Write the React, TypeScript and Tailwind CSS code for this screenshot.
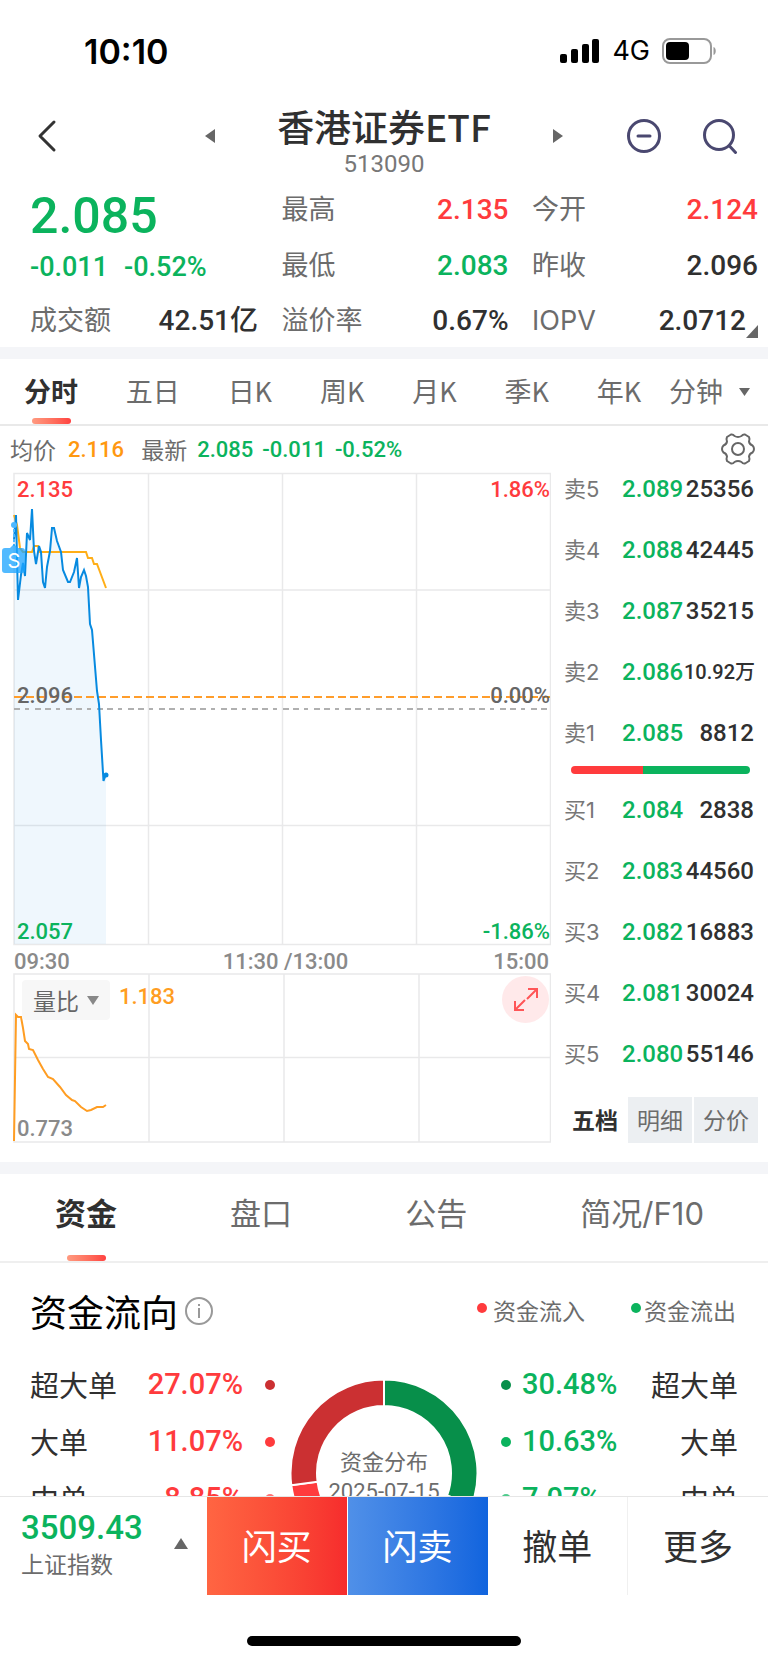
import type { ReactNode } from 'react'

const NUM = "font-['Roboto','Noto_Sans_CJK_SC',sans-serif] font-medium"
const UP = 'text-[#ff3b3d]'
const DOWN = 'text-[#0bb35d]'
const INK = 'text-[#303030]'

function Num({ className = '', children }: { className?: string; children: ReactNode }) {
  return <span className={`${NUM} whitespace-nowrap ${className}`}>{children}</span>
}

function StatusBar() {
  return (
    <div className="flex h-[102px] items-center justify-between pl-[84px] pr-[51px]">
      <span className="font-['Inter',sans-serif] text-[34px] font-semibold text-black">10:10</span>
      <div className="flex items-center gap-[12px]">
        <svg width="40" height="25" viewBox="0 0 40 25" fill="#000" aria-hidden="true">
          <rect x="0" y="15" width="7" height="9" rx="2" />
          <rect x="11" y="10" width="7" height="14" rx="2" />
          <rect x="22" y="5" width="7" height="19" rx="2" />
          <rect x="32" y="0" width="7" height="24" rx="2" />
        </svg>
        <span className="font-['Inter',sans-serif] text-[27px] text-black">4G</span>
        <svg width="55" height="26" viewBox="0 0 55 26" aria-hidden="true">
          <rect x="1" y="1" width="48" height="24" rx="7" fill="none" stroke="#999" strokeWidth="2" />
          <rect x="4" y="4" width="23" height="18" rx="4" fill="#000" />
          <path d="M51.500 9c3 1 3 7 0 8z" fill="#999" />
        </svg>
      </div>
    </div>
  )
}

function Header() {
  return (
    <header className="flex h-[80px] items-start justify-between pl-[32px] pr-[30px]">
      <button aria-label="返回" className="mt-[16px] flex h-[36px] w-[32px] items-center">
        <svg width="26" height="34" viewBox="0 0 26 34" fill="none" stroke="#333" strokeWidth="3" strokeLinecap="round" strokeLinejoin="round">
          <path d="M22 3L8 17l14 14" />
        </svg>
      </button>
      <div className="ml-[78px] flex items-start gap-[62px]">
        <button aria-label="上一只" className="mt-[27px]">
          <svg width="10" height="14" viewBox="0 0 10 14" fill="#666"><path d="M10 0v14L0 7z" /></svg>
        </button>
        <div className="flex flex-col items-center">
          <h1 className="text-[37px] font-medium leading-[48px] text-[#303030]">香港证券ETF</h1>
          <Num className="text-[24px] leading-[28px] font-normal text-[#777]">513090</Num>
        </div>
        <button aria-label="下一只" className="mt-[27px]">
          <svg width="10" height="14" viewBox="0 0 10 14" fill="#666"><path d="M0 0v14L10 7z" /></svg>
        </button>
      </div>
      <div className="mt-[16px] flex gap-[40px]">
        <button aria-label="移除自选">
          <svg width="36" height="36" viewBox="0 0 36 36" fill="none" stroke="#4a4870" strokeWidth="3" strokeLinecap="round">
            <circle cx="18" cy="18" r="15.500" /><path d="M12 18h12" />
          </svg>
        </button>
        <button aria-label="搜索">
          <svg width="36" height="36" viewBox="0 0 36 36" fill="none" stroke="#4a4870" strokeWidth="3" strokeLinecap="round">
            <circle cx="17" cy="17" r="14.500" /><path d="M27.500 28l6 6.500" />
          </svg>
        </button>
      </div>
    </header>
  )
}

function Stat({ label, value, tone = INK, className = '' }: { label: string; value: string; tone?: string; className?: string }) {
  return (
    <div className={`flex items-center justify-between ${className}`}>
      <span className="font-['Inter','Noto_Sans_CJK_SC',sans-serif] text-[27px] leading-[36px] text-[#6c6c6c]">{label}</span>
      <Num className={`text-[28px] leading-[36px] ${tone}`}>{value}</Num>
    </div>
  )
}

function Quote() {
  return (
    <section className="grid h-[165px] grid-cols-[228px_227px_226px] grid-rows-[56px_56px_53px] content-start justify-between pl-[30px] pr-[10px]">
      <div className="row-span-2 flex flex-col justify-center gap-[4px]">
        <Num className={`text-[50px] leading-[54px] ${DOWN}`}>2.085</Num>
        <div className={`flex gap-[16px] ${DOWN}`}>
          <Num className="text-[27px]">-0.011</Num>
          <Num className="text-[27px]">-0.52%</Num>
        </div>
      </div>
      <Stat label="最高" value="2.135" tone={UP} />
      <Stat label="今开" value="2.124" tone={UP} />
      <Stat label="最低" value="2.083" tone={DOWN} />
      <Stat label="昨收" value="2.096" />
      <Stat label="成交额" value="42.51亿" />
      <Stat label="溢价率" value="0.67%" />
      <div className="flex items-center">
        <Stat label="IOPV" value="2.0712" className="flex-1" />
        <svg className="mb-[9px] self-end" width="12" height="13" viewBox="0 0 12 13" fill="#666" aria-hidden="true"><path d="M12 0v13H0z" /></svg>
      </div>
    </section>
  )
}

const periods = ['分时', '五日', '日K', '周K', '月K', '季K', '年K']

function PeriodTabs() {
  return (
    <nav className="flex h-[67px] items-stretch justify-between border-b-2 border-[#e9e9e9] pl-[24px] pr-[18px] text-[27px] text-[#6c6c6c]">
      {periods.map((p, i) => (
        <button key={p} className={i === 0 ? 'relative font-bold text-[#303030]' : ''}>
          {p}
          {i === 0 && <span className="absolute bottom-0 left-[8px] h-[6px] w-[39px] rounded-full bg-linear-to-r from-[#ff9a80] to-[#ff4040]" />}
        </button>
      ))}
      <button className="-ml-[20px] flex items-center gap-[16px]">
        分钟
        <svg width="11" height="8" viewBox="0 0 11 8" fill="#666" aria-hidden="true"><path d="M0 0h11L5.500 8z" /></svg>
      </button>
    </nav>
  )
}

function Summary() {
  return (
    <div className="flex h-[46px] items-center pl-[10px] pr-[13px] text-[23px] text-[#6c6c6c]">
      <span>均价</span>
      <Num className="ml-[12px] text-[22px] text-[#ff9810]">2.116</Num>
      <span className="ml-[17px]">最新</span>
      <Num className={`ml-[10px] text-[22px] ${DOWN}`}>2.085</Num>
      <Num className={`ml-[9px] text-[22px] ${DOWN}`}>-0.011</Num>
      <Num className={`ml-[9px] text-[22px] ${DOWN}`}>-0.52%</Num>
      <button aria-label="图表设置" className="ml-auto">
        <svg width="34" height="34" viewBox="0 0 34 34" fill="none" stroke="#666" strokeWidth="2" strokeLinejoin="round">
          <path d="M10 2.500Q12 2 13.500 4Q17 6 20.500 4Q22 2 24 2.500L28 5Q29 7 28 9.500Q28.500 12.500 31.500 13.500Q33 15 33 17Q33 19 31.500 20.500Q28.500 21.500 28 24.500Q29 27 28 29L24 31.500Q22 32 20.500 30Q17 28 13.500 30Q12 32 10 31.500L6 29Q5 27 6 24.500Q5.500 21.500 2.500 20.500Q1 19 1 17Q1 15 2.500 13.500Q5.500 12.500 6 9.500Q5 7 6 5Z" />
          <circle cx="17" cy="17" r="6" />
        </svg>
      </button>
    </div>
  )
}

const priceLine =
  '14,540 16,515 18,600 21,575 23,563 25,576 27,533 30,540 32,509 34,551 36,564 39,546 41,552 43,582 45,588 47,567 50,551 52,528 54,528 57,541 61,552 63,570 68,582 70,582 74,572 77,558 79,588 81,577 84,570 86,576 88,587 90,624 92,630 97,691 99,704 101,740 103.500,781 106,774'
const averageLine =
  '14,515 17,525 20,548 23,552 32,552 34,546 38,546 40,552 86,552 88,558 92,558 94,564 97,564 106,588'

function PriceChart() {
  return (
    <div className="relative">
      <svg className="block" width="100%" height="474" viewBox="0 472 551 474" preserveAspectRatio="none" fill="none" aria-label="分时走势">
        <g stroke="#e9e9ea" strokeWidth="1.500">
          <path d="M14 473.500H550.500V944.500H14zM148.500 473V944M282.500 473V944M416.500 473V944M14 590H551M14 825.500H551" />
        </g>
        <polygon points={`${priceLine} 106,944 14,944`} fill="#0a8be0" fillOpacity="0.065" />
        <path d="M14 697H551" stroke="#ff9d2b" strokeWidth="2" strokeDasharray="8 4" />
        <path d="M14 709H551" stroke="#b0b0b0" strokeWidth="2" strokeDasharray="6 5 4 6 6 4" />
        <polyline points={averageLine} stroke="#ffae17" strokeWidth="2" />
        <polyline points={priceLine} stroke="#078ae0" strokeWidth="2" />
        <circle cx="106" cy="775" r="2.500" fill="#078ae0" />
        <path d="M14 524v22" stroke="#4db8ff" strokeWidth="2" strokeDasharray="3 2" />
        <circle cx="14" cy="525" r="3" fill="#4db8ff" />
        <path d="M14 544l4 4H22q3 0 3 3v19q0 3-3 3H5q-3 0-3-3v-19q0-3 3-3h5z" fill="#1ca4ff" fillOpacity="0.760" />
      </svg>
      <span className="absolute left-[3px] top-[79px] w-[22px] text-center font-['Inter',sans-serif] text-[20px] leading-[20px] text-white">S</span>
      <Num className={`absolute left-[17px] top-[5px] text-[22px] leading-[26px] ${UP}`}>2.135</Num>
      <Num className={`absolute right-[1px] top-[5px] text-[22px] leading-[26px] ${UP}`}>1.86%</Num>
      <Num className="absolute left-[17px] top-[211px] text-[22px] leading-[26px] text-[#666]">2.096</Num>
      <Num className="absolute right-[1px] top-[211px] text-[22px] leading-[26px] text-[#666]">0.00%</Num>
      <Num className={`absolute bottom-[1px] left-[17px] text-[22px] leading-[26px] ${DOWN}`}>2.057</Num>
      <Num className={`absolute bottom-[1px] right-[1px] text-[22px] leading-[26px] ${DOWN}`}>-1.86%</Num>
    </div>
  )
}

function RatioChart() {
  return (
    <div className="relative">
      <svg className="block" width="100%" height="170" viewBox="0 973 551 170" preserveAspectRatio="none" fill="none" aria-label="量比走势">
        <path d="M14 974H550.500V1142H14zM149 974V1142M284 974V1142M419 974V1142M14 1057.500H551" stroke="#e9e9ea" strokeWidth="1.500" />
        <polyline
          points="14,1141 16,1015 18,1017 21,1017 23,1028 25,1041 28,1044 29,1049 33,1050 38,1060 43,1069 48,1077 53,1079 60,1087 66,1095 72,1100 75,1101 81,1107 87,1111 91,1110 97,1107 103,1107 106,1105"
          stroke="#ff9d22"
          strokeWidth="2"
        />
      </svg>
      <button className="absolute left-[22px] top-[7px] flex h-[40px] w-[88px] items-center justify-center gap-[8px] rounded-[4px] bg-[#f7f7f7] text-[23px] text-[#666]">
        量比
        <svg width="12" height="9" viewBox="0 0 12 9" fill="#888" aria-hidden="true"><path d="M0 0h12L6 9z" /></svg>
      </button>
      <Num className="absolute left-[119px] top-[11px] text-[22px] leading-[26px] text-[#ff9d22]">1.183</Num>
      <Num className="absolute bottom-[1px] left-[17px] text-[22px] leading-[26px] text-[#8a8a8a]">0.773</Num>
      <button aria-label="全屏" className="absolute right-[2px] top-[3px] flex size-[47px] items-center justify-center rounded-full bg-[#ffe9ea]">
        <svg width="26" height="26" viewBox="0 0 26 26" fill="none" stroke="#ff5557" strokeWidth="2">
          <path d="M15 2h9v9M24 2L14 12M2 14v9h9M2 23l10-10" />
        </svg>
      </button>
    </div>
  )
}

const asks = [
  ['卖5', '2.089', '25356'],
  ['卖4', '2.088', '42445'],
  ['卖3', '2.087', '35215'],
  ['卖2', '2.086', '10.92万'],
  ['卖1', '2.085', '8812'],
]
const bids = [
  ['买1', '2.084', '2838'],
  ['买2', '2.083', '44560'],
  ['买3', '2.082', '16883'],
  ['买4', '2.081', '30024'],
  ['买5', '2.080', '55146'],
]

function Levels({ rows }: { rows: string[][] }) {
  return (
    <table className="w-full table-fixed">
      <tbody>
        {rows.map(([label, price, volume]) => (
          <tr key={label} className="h-[61px]">
            <th scope="row" className="w-[58px] p-0 text-left font-['Inter','Noto_Sans_CJK_SC',sans-serif] text-[22px] leading-[30px] font-normal text-[#777]">{label}</th>
            <td className={`w-[62px] p-0 text-[24px] leading-[30px] ${NUM} ${DOWN}`}>{price}</td>
            <td className={`p-0 text-right leading-[30px] whitespace-nowrap ${NUM} ${INK} ${volume.endsWith('万') ? 'text-[20px]' : 'text-[24px]'}`}>{volume}</td>
          </tr>
        ))}
      </tbody>
    </table>
  )
}

function OrderBook() {
  return (
    <aside className="flex w-[217px] shrink-0 flex-col pl-[13px] pr-[10px]">
      <div className="-mt-[14px] pr-[4px]">
        <Levels rows={asks} />
        <div className="mb-[5px] ml-[7px] mr-[4px] mt-[3px] flex h-[8px] overflow-hidden rounded-full">
          <div className="w-2/5 bg-[#ff3b3d]" />
          <div className="flex-1 bg-[#0bb35d]" />
        </div>
        <Levels rows={bids} />
      </div>
      <div className="mt-auto flex h-[46px] gap-[2px] text-[23px] leading-[30px] text-[#6c6c6c]">
        <button className="w-[62px] pb-[3px] font-bold text-[#303030]">五档</button>
        <button className="flex-1 bg-[#eceff2] pb-[3px]">明细</button>
        <button className="flex-1 bg-[#eceff2] pb-[3px]">分价</button>
      </div>
    </aside>
  )
}

function InfoTabs() {
  return (
    <nav className="flex h-[89px] justify-between border-b-2 border-[#efefef] pl-[55px] pr-[64px] font-['Inter','Noto_Sans_CJK_SC',sans-serif] text-[31px] text-[#6c6c6c]">
      <button className="relative pb-[7px] font-bold text-[#303030]">
        资金
        <span className="absolute bottom-0 left-[12px] h-[6px] w-[39px] rounded-full bg-linear-to-r from-[#ff9a80] to-[#ff4040]" />
      </button>
      <button className="pb-[7px]">盘口</button>
      <button className="pb-[7px]">公告</button>
      <button className="pb-[7px]">简况/F10</button>
    </nav>
  )
}

function Dot({ className }: { className: string }) {
  return <span className={`size-[10px] shrink-0 rounded-full ${className}`} />
}

const inflow = [
  ['超大单', '27.07%', 'bg-[#cb3032]'],
  ['大单', '11.07%', 'bg-[#ff3b3d]'],
  ['中单', '8.85%', 'bg-[#ff7476]'],
]
const outflow = [
  ['超大单', '30.48%', 'bg-[#078f4a]'],
  ['大单', '10.63%', 'bg-[#0bb35d]'],
  ['中单', '7.07%', 'bg-[#4fcb8c]'],
]

function ring(from: number, to: number) {
  const at = (deg: number, r: number) => {
    const a = ((deg - 90) * Math.PI) / 180
    return `${94 + r * Math.cos(a)} ${94 + r * Math.sin(a)}`
  }
  return `M${at(from, 93.5)}A93.500 93.500 0 0 1 ${at(to, 93.5)}L${at(to, 67)}A67 67 0 0 0 ${at(from, 67)}Z`
}

function FundFlow() {
  return (
    <section className="px-[30px] pt-[21px]">
      <div className="flex h-[56px] items-center">
        <h2 className="text-[37px] text-black">资金流向</h2>
        <button aria-label="资金流向说明" className="mb-[3px] ml-[7px]">
          <svg width="28" height="28" viewBox="0 0 28 28" fill="none" stroke="#999" strokeWidth="2">
            <circle cx="14" cy="14" r="13" /><path d="M14 11v10M14 7v2" />
          </svg>
        </button>
        <div className="mb-[4px] ml-auto flex items-center pr-[2px] text-[23px] text-[#6c6c6c]">
          <Dot className="mb-[5px] bg-[#ff3b3d]" />
          <span className="ml-[6px]">资金流入</span>
          <Dot className="mb-[5px] ml-[46px] bg-[#0bb35d]" />
          <span className="ml-[3px]">资金流出</span>
        </div>
      </div>
      <div className="mt-[16px] grid grid-cols-[1fr_188px_1fr]">
        <ul className="w-[245px]">
          {inflow.map(([label, value, dot]) => (
            <li key={label} className="flex h-[57px] items-center">
              <span className="text-[29px] text-[#303030]">{label}</span>
              <Num className={`ml-auto text-[29px] ${UP}`}>{value}</Num>
              <Dot className={`ml-[22px] ${dot}`} />
            </li>
          ))}
        </ul>
        <div className="relative mt-[23px] size-[188px]">
          <svg width="188" height="188" viewBox="0 0 188 188" stroke="#fff" strokeWidth="2" aria-label="资金分布">
            <path d={ring(0, 109.7)} fill="#078f4a" />
            <path d={ring(109.7, 148)} fill="#0bb35d" />
            <path d={ring(148, 180)} fill="#4fcb8c" />
            <path d={ring(180, 222.7)} fill="#ff7476" />
            <path d={ring(222.7, 262.5)} fill="#ff3b3d" />
            <path d={ring(262.5, 360)} fill="#cb3032" />
          </svg>
          <div className="absolute inset-0 flex flex-col items-center pt-[65px] text-[22px] leading-[32px] text-[#6c6c6c]">
            <span>资金分布</span>
            <span className="font-['Roboto',sans-serif] whitespace-nowrap">2025-07-15</span>
          </div>
        </div>
        <ul className="w-[237px] justify-self-end">
          {outflow.map(([label, value, dot]) => (
            <li key={label} className="flex h-[57px] items-center">
              <Dot className={dot} />
              <Num className={`ml-[11px] text-[29px] ${DOWN}`}>{value}</Num>
              <span className="ml-auto text-[29px] text-[#303030]">{label}</span>
            </li>
          ))}
        </ul>
      </div>
    </section>
  )
}

function TradeBar() {
  return (
    <footer className="shrink-0 border-t border-[#e6e6e6] bg-white">
      <div className="flex h-[98px] text-[35px] text-[#303030]">
        <button className="flex w-[207px] items-center justify-between pl-[21px] pr-[19px]">
          <span className="flex flex-col items-start pb-[7px]">
            <Num className={`text-[33px] leading-[40px] ${DOWN}`}>3509.43</Num>
            <span className="text-[23px] leading-[30px] text-[#6c6c6c]">上证指数</span>
          </span>
          <svg className="mb-[6px]" width="14" height="11" viewBox="0 0 14 11" fill="#666" aria-hidden="true"><path d="M7 0l7 11H0z" /></svg>
        </button>
        <button className="flex-1 bg-linear-to-r from-[#ff6542] to-[#f62c2d] pb-[2px] text-white">闪买</button>
        <button className="flex-1 border-l border-white bg-linear-to-r from-[#5090e8] to-[#1064de] pb-[2px] text-white">闪卖</button>
        <button className="flex-1 pb-[2px]">撤单</button>
        <button className="flex-1 border-l border-[#f0f0f0] pb-[2px]">更多</button>
      </div>
      <div className="flex h-[68px] items-end justify-center pb-[17px]">
        <div className="h-[10px] w-[274px] rounded-full bg-black" />
      </div>
    </footer>
  )
}

export default function App() {
  return (
    <div className="flex h-screen flex-col bg-white font-['Noto_Sans_CJK_SC',sans-serif]">
      <main className="min-h-0 flex-1 overflow-hidden">
        <StatusBar />
        <Header />
        <Quote />
        <div className="h-[12px] bg-[#f4f5f8]" />
        <PeriodTabs />
        <Summary />
        <div className="flex">
          <div className="min-w-0 flex-1">
            <PriceChart />
            <div className={`flex h-[27px] items-center justify-between pl-[14px] pr-[2px] pt-[3px] text-[22px] text-[#8a8a8a] ${NUM}`}>
              <span>09:30</span>
              <span className="ml-[8px]">11:30 /13:00</span>
              <span>15:00</span>
            </div>
            <RatioChart />
          </div>
          <OrderBook />
        </div>
        <div className="mt-[19px] h-[12px] bg-[#f4f5f8]" />
        <InfoTabs />
        <FundFlow />
      </main>
      <TradeBar />
    </div>
  )
}
